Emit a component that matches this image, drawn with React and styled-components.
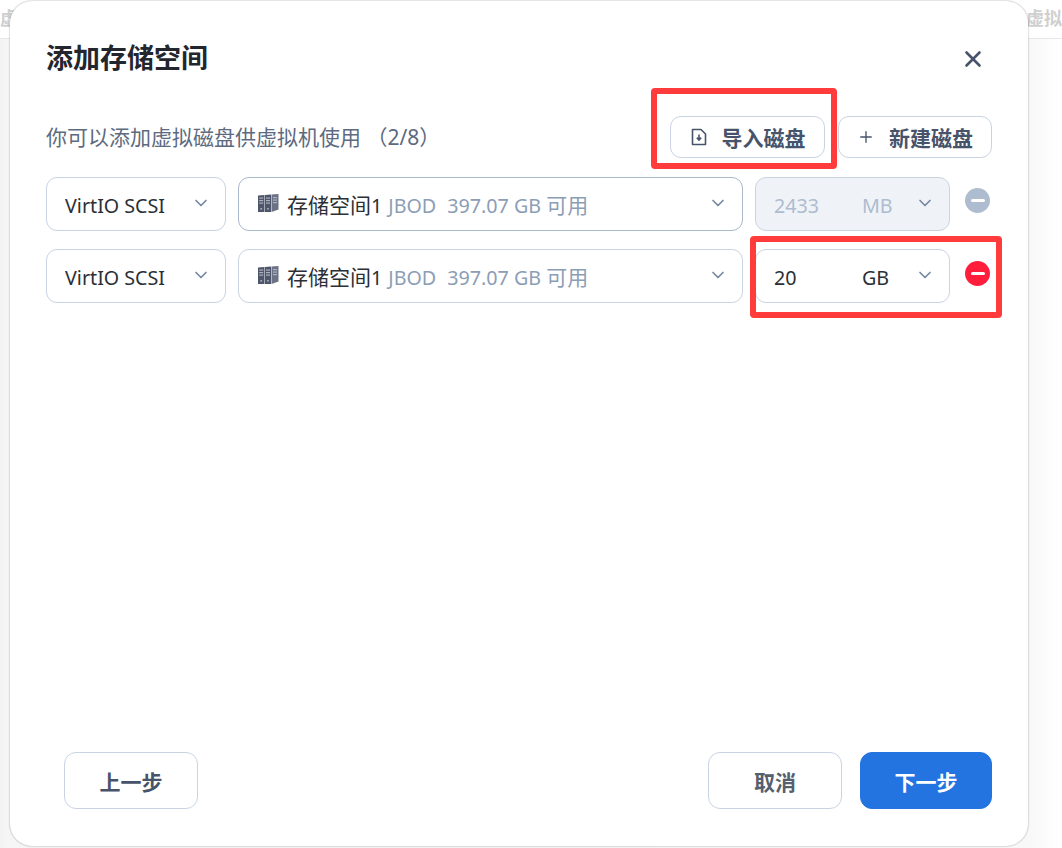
import React from "react";
import styled, { createGlobalStyle } from "styled-components";
import { ChevronDown, Plus, X } from "lucide-react";

const Global = createGlobalStyle`
  html, body {
    margin: 0;
    height: 100%;
    background: #fff;
  }
  body {
    font-family: "Noto Sans", "Noto Sans CJK SC", sans-serif;
    overflow: hidden;
  }
`;

const Page = styled.div`
  position: relative;
  width: 1062px;
  height: 848px;
  overflow: hidden;
  background: linear-gradient(90deg, #f3f3f3 0, #f6f6f6 10px, #f8f8f8 1030px, #fff 1062px);
`;

const BackHeader = styled.div`
  display: flex;
  justify-content: space-between;
  height: 38px;
  padding: 0;
  border-bottom: 1px solid #e8e8e8;
  background: #fff;
  color: #cfcfcf;
  font-size: 18px;
  font-weight: 700;
  line-height: 36px;
  white-space: nowrap;
  overflow: hidden;
`;

const Dialog = styled.div`
  position: absolute;
  left: 10px;
  top: 1px;
  width: 1018px;
  height: 845px;
  box-sizing: border-box;
  padding: 0 36px 37px;
  display: flex;
  flex-direction: column;
  background: #fff;
  border-radius: 22px;
  box-shadow: 0 0 2px rgba(0, 0, 0, 0.4);
`;

const TitleBar = styled.div`
  display: flex;
  align-items: flex-start;
  justify-content: space-between;
  height: 115px;
`;

const Title = styled.h2`
  margin: 36px 0 0;
  font-size: 27px;
  line-height: 42px;
  font-weight: 700;
  color: #23262d;
`;

const CloseBtn = styled.button`
  margin: 45px 6px 0 0;
  padding: 0;
  border: 0;
  background: none;
  color: #47536a;
  display: flex;
`;

const ToolRow = styled.div`
  display: flex;
  align-items: center;
  height: 42px;
  gap: 13px;
`;

const Hint = styled.div`
  flex: 1;
  font-size: 21px;
  line-height: 42px;
  color: #5d6a80;
  white-space: nowrap;
`;

const ToolBtn = styled.button`
  box-sizing: border-box;
  width: ${(p) => p.$w}px;
  height: 42px;
  display: flex;
  align-items: center;
  justify-content: center;
  gap: 14px;
  padding: 0;
  background: #fff;
  border: 1px solid #c9d4e2;
  border-radius: 11px;
  color: #47536a;
  font: 700 21px "Noto Sans", "Noto Sans CJK SC", sans-serif;
`;

const Rows = styled.div`
  display: flex;
  flex-direction: column;
  gap: 18px;
  margin-top: 19px;
`;

const Row = styled.div`
  display: flex;
  gap: 12px;
`;

const Select = styled.div`
  box-sizing: border-box;
  width: ${(p) => p.$w}px;
  height: 54px;
  display: flex;
  align-items: center;
  padding: 4px 14px 0 18px;
  border: 1px solid ${(p) => (p.$active ? "#a9b8cb" : "#c9d4e2")};
  border-radius: 11px;
  background: ${(p) => (p.$disabled ? "#eff3f8" : "#fff")};
  color: ${(p) => (p.$disabled ? "#aebccf" : "#2b2f36")};
  font-size: 19.7px;
  line-height: 28px;
  white-space: nowrap;
`;

const Grow = styled.span`
  flex: 1;
  display: flex;
  align-items: center;
  min-width: 0;
`;

const PoolLabel = styled.span`
  margin-left: 8px;
`;

const Cjk = styled.span`
  font-size: 21px;
  line-height: 1;
`;

const Meta = styled.span`
  margin-left: 6px;
  color: #8c9db6;
`;

const Kind = styled.span`
  margin-right: 11px;
`;

const SizeValue = styled.span`
  width: 88px;
`;

const Chevron = styled(ChevronDown)`
  flex: none;
  color: #75869f;
  margin-top: -6px;
`;

const RemoveBtn = styled.button`
  flex: none;
  width: 25px;
  height: 25px;
  margin: ${(p) => p.$top}px 0 0 3px;
  padding: 0;
  border: 0;
  border-radius: 50%;
  background: ${(p) => (p.$disabled ? "#aebccf" : "#ff1f3d")};
  display: flex;
  align-items: center;
  justify-content: center;
  &::before {
    content: "";
    width: 14px;
    height: 3px;
    border-radius: 2px;
    background: #fff;
  }
`;

const Footer = styled.div`
  margin-top: auto;
  display: flex;
  align-items: center;
  gap: 18px;
  padding-left: 18px;
`;

const FootBtn = styled.button`
  box-sizing: border-box;
  width: ${(p) => p.$w}px;
  height: 57px;
  padding: 0;
  border: 1px solid ${(p) => (p.$primary ? "#2374e1" : "#c9d4e2")};
  border-radius: 12px;
  background: ${(p) => (p.$primary ? "#2374e1" : "#fff")};
  color: ${(p) => (p.$primary ? "#fff" : p.$muted ? "#555f6e" : "#47536a")};
  font: 700 21px "Noto Sans", "Noto Sans CJK SC", sans-serif;
  &:first-child {
    margin-right: auto;
  }
`;

const Mark = styled.div`
  position: absolute;
  left: ${(p) => p.$x}px;
  top: ${(p) => p.$y}px;
  width: ${(p) => p.$w}px;
  height: ${(p) => p.$h}px;
  box-sizing: border-box;
  border: 6px solid #ff3b3b;
  border-radius: 4px;
  pointer-events: none;
`;

const PoolGlyph = styled.svg`
  flex: none;
  margin: -6px 0 0 1px;
`;

// little three-bay disk array glyph in front of the pool name
const PoolIcon = () => (
  <PoolGlyph width="21" height="20" viewBox="0 0 21 20">
    <path d="M0 2.5 L6.5 2 V19 L0 19 Z" fill="#4f566b" />
    <path d="M7 2 L13 1.5 V19 L7 19 Z" fill="#4f566b" />
    <path d="M13.5 1.5 L20.5 1 V16.5 L13.5 19 Z" fill="#6b7285" />
    <g fill="#aab1c1">
      <rect x="1.2" y="4.5" width="4" height="1.2" />
      <rect x="1.2" y="7" width="4" height="1.2" />
      <rect x="1.2" y="9.5" width="4" height="1.2" />
      <rect x="2.4" y="15" width="1.6" height="1.6" />
      <rect x="8" y="4.5" width="4" height="1.2" />
      <rect x="8" y="7" width="4" height="1.2" />
      <rect x="8" y="9.5" width="4" height="1.2" />
      <rect x="9.2" y="15" width="1.6" height="1.6" />
      <rect x="15" y="4" width="4" height="1.2" />
      <rect x="15" y="6.5" width="4" height="1.2" />
      <rect x="15" y="9" width="4" height="1.2" />
    </g>
  </PoolGlyph>
);

const ImportIcon = () => (
  <svg width="18" height="18" viewBox="0 0 18 18" fill="none" stroke="#47536a" strokeWidth="1.6">
    <path d="M2.5 1.5 H11 L15.5 6 V16.5 H2.5 Z" strokeLinejoin="round" />
    <path d="M9 6.5 V11.5" />
    <path d="M6.8 9.8 L9 12 L11.2 9.8" fill="#47536a" />
  </svg>
);

function StorageRow({ unit, value, disabled, active, top }) {
  return (
    <Row>
      <Select $w={180}>
        <Grow>VirtIO SCSI</Grow>
        <Chevron size={20} strokeWidth={2} />
      </Select>
      <Select $w={505} $active={active}>
        <Grow>
          <PoolIcon />
          <PoolLabel>
            <Cjk>存储空间</Cjk>1
            <Meta>
              <Kind>JBOD</Kind>397.07 GB <Cjk>可用</Cjk>
            </Meta>
          </PoolLabel>
        </Grow>
        <Chevron size={20} strokeWidth={2} />
      </Select>
      <Select $w={195} $disabled={disabled}>
        <SizeValue>{value}</SizeValue>
        <Grow>{unit}</Grow>
        <Chevron size={20} strokeWidth={2} />
      </Select>
      <RemoveBtn $disabled={disabled} $top={top} aria-label="remove" />
    </Row>
  );
}

export default function App() {
  return (
    <Page>
      <Global />
      <BackHeader>
        <span>虚拟</span>
        <span>虚拟</span>
      </BackHeader>
      <Dialog>
        <TitleBar>
          <Title>添加存储空间</Title>
          <CloseBtn aria-label="close">
            <X size={26} strokeWidth={2.4} />
          </CloseBtn>
        </TitleBar>
        <ToolRow>
          <Hint>你可以添加虚拟磁盘供虚拟机使用 （2/8）</Hint>
          <ToolBtn $w={155}>
            <ImportIcon />
            导入磁盘
          </ToolBtn>
          <ToolBtn $w={154}>
            <Plus size={18} strokeWidth={1.8} />
            新建磁盘
          </ToolBtn>
        </ToolRow>
        <Rows>
          <StorageRow value="2433" unit="MB" disabled active top={11} />
          <StorageRow value="20" unit="GB" top={12} />
        </Rows>
        <Footer>
          <FootBtn $w={134}>上一步</FootBtn>
          <FootBtn $w={134} $muted>取消</FootBtn>
          <FootBtn $w={132} $primary>下一步</FootBtn>
        </Footer>
      </Dialog>
      <Mark $x={651} $y={88} $w={186} $h={81} />
      <Mark $x={750} $y={236} $w={252} $h={82} />
    </Page>
  );
}
